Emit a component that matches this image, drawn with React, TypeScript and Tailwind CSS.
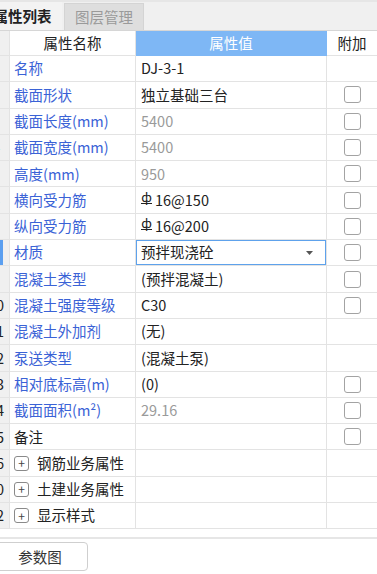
import React from "react";

type Row = {
  n: number;
  name: string;
  val?: string;
  kind?: "text" | "gray" | "rebar" | "select" | "group";
  blue?: boolean;
  cb?: boolean;
  selected?: boolean;
};

const rows: Row[] = [
  { n: 1, name: "名称", val: "DJ-3-1", blue: true },
  { n: 2, name: "截面形状", val: "独立基础三台", blue: true, cb: true },
  { n: 3, name: "截面长度(mm)", val: "5400", kind: "gray", blue: true, cb: true },
  { n: 4, name: "截面宽度(mm)", val: "5400", kind: "gray", blue: true, cb: true },
  { n: 5, name: "高度(mm)", val: "950", kind: "gray", blue: true, cb: true },
  { n: 6, name: "横向受力筋", val: "16@150", kind: "rebar", blue: true, cb: true },
  { n: 7, name: "纵向受力筋", val: "16@200", kind: "rebar", blue: true, cb: true },
  { n: 8, name: "材质", val: "预拌现浇砼", kind: "select", blue: true, cb: true, selected: true },
  { n: 9, name: "混凝土类型", val: "(预拌混凝土)", blue: true, cb: true },
  { n: 10, name: "混凝土强度等级", val: "C30", blue: true, cb: true },
  { n: 11, name: "混凝土外加剂", val: "(无)", blue: true },
  { n: 12, name: "泵送类型", val: "(混凝土泵)", blue: true },
  { n: 13, name: "相对底标高(m)", val: "(0)", blue: true, cb: true },
  { n: 14, name: "截面面积(m²)", val: "29.16", kind: "gray", blue: true, cb: true },
  { n: 15, name: "备注", val: "", cb: true },
  { n: 16, name: "钢筋业务属性", kind: "group" },
  { n: 30, name: "土建业务属性", kind: "group" },
  { n: 42, name: "显示样式", kind: "group" },
];

const line = "border-[#e3e3e3]";

function Checkbox() {
  return <div className="h-[17px] w-[17px] rounded-[3px] border-[1.5px] border-[#a3a3a3] bg-white" />;
}

function Rebar() {
  return (
    <span className="mr-[3px] inline-flex h-[12px] w-[11px] -translate-y-[2px] items-end justify-center border-b-[1.5px] border-[#222] text-[13px] leading-[12px]">
      ф
    </span>
  );
}

function Value({ r }: { r: Row }) {
  if (r.kind === "group") return null;
  if (r.kind === "select") {
    return (
      <div className="flex h-full w-full items-center justify-between border-[1.5px] border-[#5ea2ec] pl-[4px] pr-[12px] text-[#222]">
        <span>{r.val}</span>
        <svg width="7" height="4" viewBox="0 0 7 4">
          <path d="M0 0h7L3.5 4z" fill="#555" />
        </svg>
      </div>
    );
  }
  return (
    <div className={`flex h-full items-center pl-[5px] ${r.kind === "gray" ? "text-[#9a9a9a]" : "text-[#222]"}`}>
      {r.kind === "rebar" && <Rebar />}
      {r.val}
    </div>
  );
}

export default function App() {
  return (
    <div
      className="h-[574px] w-[377px] overflow-hidden bg-white text-[14.5px] leading-none"
      style={{ fontFamily: '"Noto Sans CJK SC", "Noto Sans", sans-serif' }}
    >
      {/* tabs */}
      <div className="flex h-[30px] items-end border-t-2 border-[#e6e6e6] bg-[#f0f0f0]">
        <div className="-ml-[17px] flex h-full w-[79px] items-center justify-center bg-[#f3f3f3] font-bold text-[#222]">
          属性列表
        </div>
        <div className="ml-[2px] flex h-[27px] w-[80px] items-center justify-center border border-b-0 border-[#d4d4d4] bg-[#dedede] text-[#9a9a9a]">
          图层管理
        </div>
      </div>

      {/* table */}
      <div className="grid grid-cols-[10px_126px_191px_50px] border-t border-[#d6d6d6]">
        <div className={`h-[25px] border-r border-b ${line} bg-[#f0f0f0]`} />
        <div className={`flex h-[25px] items-center justify-center border-r border-b ${line} text-[#222]`}>
          属性名称
        </div>
        <div className="flex h-[25px] items-center justify-center border-r border-b border-[#7eb7f5] bg-[#7eb7f5] text-white">
          属性值
        </div>
        <div className={`flex h-[25px] items-center justify-center border-b ${line} text-[#222]`}>附加</div>

        {rows.map((r) => (
          <React.Fragment key={r.n}>
            <div
              className={`h-[26.3px] overflow-hidden border-r border-b ${line} bg-[#f0f0f0] ${
                r.selected ? "shadow-[inset_3px_0_0_#5b9ff0]" : ""
              }`}
            >
              <div className="-ml-[18px] flex h-full w-[28px] items-center justify-center text-[#222]">{r.n}</div>
            </div>
            <div
              className={`flex h-[26.3px] items-center border-r border-b ${line} pl-[4px] ${
                r.blue ? "text-[#3a62d6]" : "text-[#222]"
              }`}
            >
              {r.kind === "group" && (
                <span className="mr-[8px] flex h-[15px] w-[15px] items-center justify-center rounded-[3px] border border-[#8a8a8a] text-[12px] text-[#444]">
                  +
                </span>
              )}
              {r.name}
            </div>
            <div className={`h-[26.3px] border-r border-b ${line}`}>
              <Value r={r} />
            </div>
            <div className={`flex h-[26.3px] items-center justify-center border-b ${line}`}>
              {r.cb && <Checkbox />}
            </div>
          </React.Fragment>
        ))}
      </div>

      <div className="mt-[8px] h-[2px] bg-[#e6e6e6]" />
      <div className="pt-[3px]">
        <button className="-ml-[8px] flex h-[29px] w-[96px] items-center justify-center rounded-[4px] border border-[#cfcfcf] bg-white text-[#333]">
          参数图
        </button>
      </div>
    </div>
  );
}
